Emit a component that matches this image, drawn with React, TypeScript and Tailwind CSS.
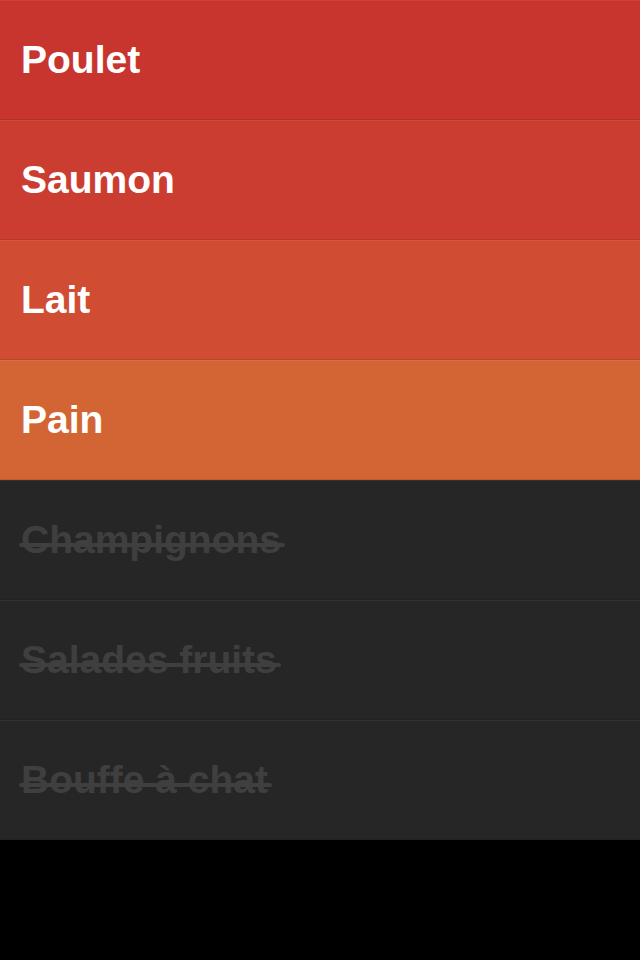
import React from "react";

const active = [
  { label: "Poulet", bg: "bg-[#c8352f]", top: "border-t-[#cc4038]", bottom: "border-b-[#b32f29]" },
  { label: "Saumon", bg: "bg-[#cb3c31]", top: "border-t-[#d0473b]", bottom: "border-b-[#b8372c]" },
  { label: "Lait", bg: "bg-[#d04c32]", top: "border-t-[#d4573d]", bottom: "border-b-[#bd442d]" },
  { label: "Pain", bg: "bg-[#d36534]", top: "border-t-[#d66f3e]", bottom: "border-b-[#c2592d]" },
];

const done = ["Champignons", "Salades fruits", "Bouffe à chat"];

export default function App() {
  return (
    <div className="w-[640px] h-[960px] bg-black flex flex-col" style={{ fontFamily: '"Liberation Sans", Arial, sans-serif' }}>
      {active.map((r) => (
        <div
          key={r.label}
          className={`h-[120px] flex items-center pl-[21px] border-t border-b ${r.bg} ${r.top} ${r.bottom}`}
        >
          <span className="text-white font-bold text-[39px] leading-[40px] -mt-[1px]">{r.label}</span>
        </div>
      ))}
      {done.map((t) => (
        <div
          key={t}
          className="h-[120px] flex items-center pl-[21px] bg-[#262626] border-t border-t-[#323232] border-b border-b-[#222222]"
        >
          <span className="relative text-[#3f3f3f] font-bold text-[39px] leading-[40px] -mt-[1px]">
            {t}
            <span className="absolute -left-[2px] -right-[4px] top-[23px] h-[4px] bg-[#3f3f3f] rounded-full" />
          </span>
        </div>
      ))}
    </div>
  );
}
